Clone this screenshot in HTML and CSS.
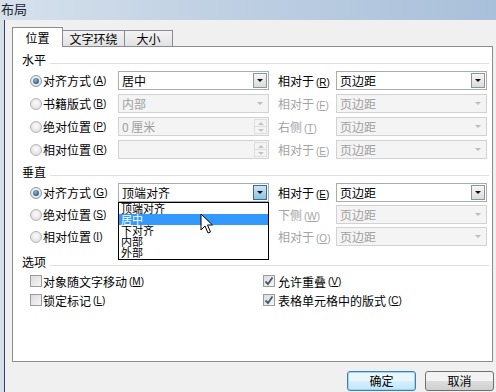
FILE: index.html
```html
<!DOCTYPE html>
<html lang="zh-CN">
<head>
<meta charset="utf-8">
<title>布局</title>
<link rel="stylesheet" href="styles.css">
</head>
<body>
<div class="window">
  <div class="titlebar">布局</div>
  <div class="frame">
    <div class="dialog">
      <div class="tabs">
        <div class="tab active">位置</div>
        <div class="tab">文字环绕</div>
        <div class="tab">大小</div>
      </div>
      <div class="panel">
        <div class="group-title"><span>水平</span></div>
        <div class="rows wide">
          <div class="row">
            <div class="opt"><span class="radio on"></span>对齐方式<span class="key">(<u>A</u>)</span></div>
            <div class="combo"><span class="val">居中</span><span class="drop"></span></div>
            <div class="rlabel">相对于<span class="key">(<u>R</u>)</span></div>
            <div class="combo"><span class="val">页边距</span><span class="drop"></span></div>
          </div>
          <div class="row">
            <div class="opt"><span class="radio"></span>书籍版式<span class="key">(<u>B</u>)</span></div>
            <div class="combo off"><span class="val">内部</span><span class="drop"></span></div>
            <div class="rlabel off">相对于<span class="key">(<u>F</u>)</span></div>
            <div class="combo off"><span class="val">页边距</span><span class="drop"></span></div>
          </div>
          <div class="row">
            <div class="opt"><span class="radio"></span>绝对位置<span class="key">(<u>P</u>)</span></div>
            <div class="combo off"><span class="val">0 厘米</span><span class="spin"><i class="up"></i><i class="down"></i></span></div>
            <div class="rlabel off">右侧<span class="key">(<u>T</u>)</span></div>
            <div class="combo off"><span class="val">页边距</span><span class="drop"></span></div>
          </div>
          <div class="row">
            <div class="opt"><span class="radio"></span>相对位置<span class="key">(<u>R</u>)</span></div>
            <div class="combo off"><span class="val"></span><span class="spin"><i class="up"></i><i class="down"></i></span></div>
            <div class="rlabel off">相对于<span class="key">(<u>E</u>)</span></div>
            <div class="combo off"><span class="val">页边距</span><span class="drop"></span></div>
          </div>
        </div>

        <div class="group-title gap"><span>垂直</span></div>
        <div class="rows">
          <div class="row">
            <div class="opt"><span class="radio on"></span>对齐方式<span class="key">(<u>G</u>)</span></div>
            <div class="combo open">
              <span class="val">顶端对齐</span><span class="drop pressed"></span>
              <ul class="list">
                <li>顶端对齐</li>
                <li class="hl">居中</li>
                <li>下对齐</li>
                <li>内部</li>
                <li>外部</li>
                <li class="cursor-holder"><svg class="cursor" width="13" height="22" viewBox="0 0 13 22"><path d="M1 1 L1 17 L5 13 L8 20 L10.5 19 L7.5 12 L12.5 12 Z" fill="#fff" stroke="#000" stroke-width="1" stroke-linejoin="round"/></svg></li>
              </ul>
            </div>
            <div class="rlabel">相对于<span class="key">(<u>E</u>)</span></div>
            <div class="combo"><span class="val">页边距</span><span class="drop"></span></div>
          </div>
          <div class="row">
            <div class="opt"><span class="radio"></span>绝对位置<span class="key">(<u>S</u>)</span></div>
            <div class="combo off"><span class="val">0 厘米</span><span class="spin"><i class="up"></i><i class="down"></i></span></div>
            <div class="rlabel off">下侧<span class="key">(<u>W</u>)</span></div>
            <div class="combo off"><span class="val">页边距</span><span class="drop"></span></div>
          </div>
          <div class="row">
            <div class="opt"><span class="radio"></span>相对位置<span class="key">(<u>I</u>)</span></div>
            <div class="combo off"><span class="val"></span><span class="spin"><i class="up"></i><i class="down"></i></span></div>
            <div class="rlabel off">相对于<span class="key">(<u>O</u>)</span></div>
            <div class="combo off"><span class="val">页边距</span><span class="drop"></span></div>
          </div>
        </div>

        <div class="group-title gap2"><span>选项</span></div>
        <div class="checks">
          <div class="chk"><span class="box"></span>对象随文字移动<span class="key">(<u>M</u>)</span></div>
          <div class="chk"><span class="box checked"><svg width="10" height="10" viewBox="0 0 10 10"><path d="M1.5 5.5 L4 8 L8.5 1.5" fill="none" stroke="#4a5a6e" stroke-width="1.8"/></svg></span>允许重叠<span class="key">(<u>V</u>)</span></div>
          <div class="chk"><span class="box"></span>锁定标记<span class="key">(<u>L</u>)</span></div>
          <div class="chk"><span class="box checked"><svg width="10" height="10" viewBox="0 0 10 10"><path d="M1.5 5.5 L4 8 L8.5 1.5" fill="none" stroke="#4a5a6e" stroke-width="1.8"/></svg></span>表格单元格中的版式<span class="key">(<u>C</u>)</span></div>
        </div>
      </div>
      <div class="buttons">
        <div class="btn default">确定</div>
        <div class="btn">取消</div>
      </div>
    </div>
  </div>
</div>
</body>
</html>
```

FILE: styles.css
```css
* { box-sizing: border-box; margin: 0; padding: 0; }

html, body {
  width: 496px;
  height: 392px;
  overflow: hidden;
}

body {
  font-family: "Noto Sans CJK SC", "Noto Sans", sans-serif;
  font-size: 12px;
  color: #000;
  background: #f0f0f0;
}

.window {
  width: 496px;
  height: 392px;
  display: flex;
  flex-direction: column;
  background: linear-gradient(to right, #d6e1ec, #bfd0e3 45%, #a9c0da);
}

.titlebar {
  height: 20px;
  line-height: 18px;
  font-size: 13px;
  color: #1c2636;
  padding-left: 1px;
}

.frame {
  flex: 1;
  display: flex;
  padding-left: 4px;
  min-height: 0;
}

.dialog {
  flex: 1;
  display: flex;
  flex-direction: column;
  background: #f0f0f0;
  border-left: 1px solid #2f4266;
  padding-top: 7px;
}

/* tabs */
.tabs {
  display: flex;
  align-items: flex-end;
  height: 20px;
  margin-left: 7px;
  margin-bottom: -1px;
  position: relative;
  z-index: 2;
}

.tab {
  height: 16px;
  margin-bottom: 1px;
  line-height: 15px;
  text-align: center;
  border: 1px solid #898c95;
  border-bottom: 0;
  border-left: 0;
  background: linear-gradient(#f3f3f3, #e2e2e2);
}

.tab:nth-child(2) { width: 62px; }
.tab:nth-child(3) { width: 48px; }

.tab.active {
  width: 51px;
  height: 20px;
  margin-bottom: 0;
  line-height: 20px;
  border-left: 1px solid #898c95;
  background: #fff;
}

/* panel */
.panel {
  margin-left: 7px;
  margin-right: 3px;
  height: 316px;
  border: 1px solid #898c95;
  background: #fff;
  padding: 6px 2px 0 9px;
  position: relative;
  z-index: 1;
}

.group-title {
  display: flex;
  height: 14px;
  line-height: 14px;
  margin-bottom: 4px;
}

.group-title.gap { margin-top: 6px; }
.group-title.gap2 { margin-top: 9px; }

.group-title::after {
  content: "";
  flex: 1;
  align-self: flex-end;
  margin: 0 1px 3px 4px;
  border-top: 1px solid #dcdfe3;
}

.rows {
  display: flex;
  flex-direction: column;
  gap: 3px;
  margin-left: 8px;
}

.rows.wide { gap: 4px; }

.row {
  display: grid;
  grid-template-columns: 88px 151px 67px 151px;
  height: 19px;
  align-items: center;
}

.opt {
  display: flex;
  align-items: center;
  white-space: nowrap;
}

.key {
  font-family: "Liberation Sans", sans-serif;
  font-size: 10px;
  margin-left: 2px;
}

.key u { text-decoration-thickness: 1px; text-underline-offset: 1px; }

.radio {
  width: 12px;
  height: 12px;
  border-radius: 50%;
  border: 1px solid #b3b3b3;
  background: radial-gradient(circle at 50% 40%, #fcfcfc, #e3e3e3 70%);
  margin-right: 1px;
  flex: none;
  display: flex;
  align-items: center;
  justify-content: center;
}

.radio.on { border-color: #8a98a8; }

.radio.on::after {
  content: "";
  width: 6px;
  height: 6px;
  border-radius: 50%;
  background: radial-gradient(circle at 40% 35%, #8fb6d6, #2c5a82 75%);
}

.rlabel {
  padding-left: 9px;
  white-space: nowrap;
}

.rlabel.off { color: #a3a3a3; }

.combo {
  height: 19px;
  display: flex;
  align-items: center;
  border: 1px solid #a8abb2;
  background: #fff;
  position: relative;
}

.combo .val {
  flex: 1;
  padding-left: 3px;
  line-height: 17px;
  white-space: nowrap;
  overflow: hidden;
}

.combo.off {
  border-color: #d2d2d2;
  background: #f4f4f4;
  color: #a0a0a0;
}

.drop {
  width: 14px;
  height: 15px;
  margin-right: 1px;
  border: 1px solid #8d949c;
  background: linear-gradient(#f6f6f6, #dcdcdc);
  display: flex;
  align-items: center;
  justify-content: center;
}

.drop::after {
  content: "";
  border-left: 3px solid transparent;
  border-right: 3px solid transparent;
  border-top: 3px solid #111;
}

.combo.off .drop {
  border-color: transparent;
  background: transparent;
}

.combo.off .drop::after { border-top-color: #bcbcbc; }

.drop.pressed {
  border-color: #3a6d96;
  background: linear-gradient(#cbe6f6, #8fc2e2);
}

.spin {
  width: 13px;
  height: 15px;
  margin-right: 1px;
  display: flex;
  flex-direction: column;
  border: 1px solid #dedede;
}

.spin i {
  flex: 1;
  display: flex;
  align-items: center;
  justify-content: center;
}

.spin i.up { border-bottom: 1px solid #dedede; }

.spin i.up::after {
  content: "";
  border-left: 3px solid transparent;
  border-right: 3px solid transparent;
  border-bottom: 3px solid #c4c4c4;
}

.spin i.down::after {
  content: "";
  border-left: 3px solid transparent;
  border-right: 3px solid transparent;
  border-top: 3px solid #c4c4c4;
}

/* open dropdown list */
.combo.open { z-index: 5; }

.list {
  list-style: none;
  position: absolute;
  top: 18px;
  left: -1px;
  right: -1px;
  border: 1px solid #000;
  background: #fff;
  padding-bottom: 1px;
}

.list li {
  height: 11px;
  line-height: 11px;
  font-size: 11px;
  padding-left: 2px;
  white-space: nowrap;
}

.list li.hl {
  background: #3399ff;
  color: #fff;
}

.list li.cursor-holder {
  height: 0;
  position: relative;
}

.cursor {
  position: absolute;
  left: 81px;
  top: -45px;
}

/* checkboxes */
.checks {
  margin-left: 8px;
  margin-top: 1px;
  display: grid;
  grid-template-columns: 233px 1fr;
  row-gap: 3px;
}

.chk {
  height: 16px;
  display: flex;
  align-items: center;
  white-space: nowrap;
}

.box {
  width: 12px;
  height: 12px;
  border: 1px solid #9c9c9c;
  background: linear-gradient(135deg, #dcdcdc, #f6f6f6);
  margin-right: 1px;
  flex: none;
  display: flex;
  align-items: center;
  justify-content: center;
}

.chk:nth-child(even) .box { margin-right: 3px; }

/* buttons */
.buttons {
  display: flex;
  justify-content: flex-end;
  gap: 9px;
  padding: 9px 2px 0 0;
}

.btn {
  width: 69px;
  height: 20px;
  line-height: 18px;
  text-align: center;
  border: 1px solid #707070;
  border-radius: 3px;
  background: linear-gradient(#f3f3f3 50%, #dddddd 50%, #cfcfcf);
}

.btn.default {
  border-color: #3c7fb1;
  box-shadow: inset 0 0 0 1px #9fd5f3;
  background: linear-gradient(#eaf6fd 50%, #d9f0fc 50%, #bee6fd);
}
```
